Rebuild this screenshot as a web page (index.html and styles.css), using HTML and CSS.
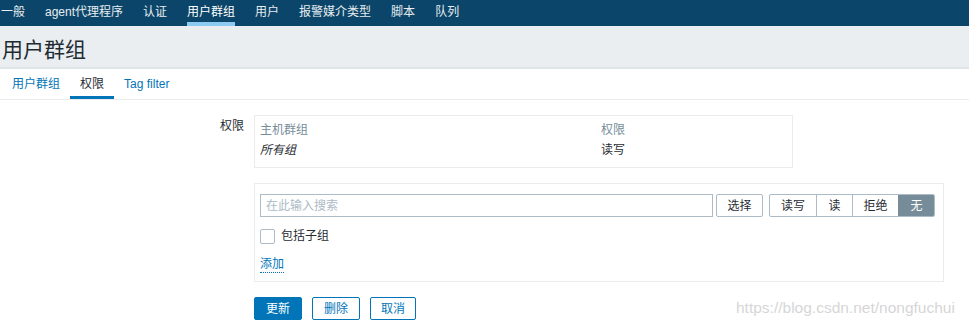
FILE: index.html
```html
<!DOCTYPE html>
<html lang="zh">
<head>
<meta charset="utf-8">
<title>用户群组</title>
<link rel="stylesheet" href="styles.css">
</head>
<body>
<nav class="topnav">
  <a class="nav-item">一般</a>
  <a class="nav-item">agent代理程序</a>
  <a class="nav-item">认证</a>
  <a class="nav-item active">用户群组</a>
  <a class="nav-item">用户</a>
  <a class="nav-item">报警媒介类型</a>
  <a class="nav-item">脚本</a>
  <a class="nav-item">队列</a>
</nav>
<header class="page-header">
  <h1 class="page-title">用户群组</h1>
</header>
<div class="tabs">
  <a class="tab">用户群组</a>
  <a class="tab active">权限</a>
  <a class="tab">Tag filter</a>
</div>
<main class="content">
  <div class="form-row">
    <label class="form-label">权限</label>
    <div class="form-field">
      <div class="perm-table">
        <div class="perm-row head">
          <span class="col-group">主机群组</span>
          <span class="col-perm">权限</span>
        </div>
        <div class="perm-row">
          <span class="col-group italic">所有组</span>
          <span class="col-perm">读写</span>
        </div>
      </div>
    </div>
  </div>
  <div class="form-row">
    <div class="form-label"></div>
    <div class="form-field">
      <div class="add-box">
        <div class="search-line">
          <input class="search-input" type="text" placeholder="在此输入搜索">
          <button class="btn-grey">选择</button>
          <div class="segmented">
            <span class="seg">读写</span>
            <span class="seg">读</span>
            <span class="seg">拒绝</span>
            <span class="seg selected">无</span>
          </div>
        </div>
        <label class="check-line">
          <span class="checkbox"></span>
          <span class="check-text">包括子组</span>
        </label>
        <a class="link-add">添加</a>
      </div>
    </div>
  </div>
  <div class="form-row">
    <div class="form-label"></div>
    <div class="form-field buttons">
      <button class="btn-main">更新</button>
      <button class="btn-alt">删除</button>
      <button class="btn-alt">取消</button>
    </div>
  </div>
</main>
<div class="watermark">https://blog.csdn.net/nongfuchui</div>
</body>
</html>
```

FILE: styles.css
```css
* { box-sizing: border-box; }
html, body {
  margin: 0;
  padding: 0;
  background: #ffffff;
}
body {
  font-family: "Liberation Sans", Arial, "Noto Sans CJK SC", sans-serif;
  font-size: 12px;
  line-height: 16px;
  color: #1f2c33;
  position: relative;
  width: 969px;
  height: 329px;
  overflow: hidden;
}

/* top navigation */
.topnav {
  display: flex;
  gap: 20px;
  height: 26px;
  background: #0b466a;
  padding-left: 1px;
}
.nav-item {
  display: block;
  padding-top: 2px;
  line-height: 20px;
  border-bottom: 4px solid transparent;
  color: #e8edf0;
  white-space: nowrap;
}
.nav-item.active {
  color: #ffffff;
  border-bottom-color: #8ccaf2;
}

/* page header */
.page-header {
  height: 43px;
  background: #ebeef0;
  border-bottom: 2px solid #dfe4e7;
  padding: 11px 0 0 2px;
}
.page-title {
  margin: 0;
  font-size: 21px;
  line-height: 25px;
  font-weight: normal;
  color: #1f2c33;
}

/* tabs */
.tabs {
  display: flex;
  padding-left: 2px;
  border-bottom: 1px solid #ebebeb;
  height: 31px;
}
.tab {
  display: block;
  padding: 7px 10px 4px;
  line-height: 16px;
  border-bottom: 3px solid transparent;
  color: #0275b8;
}
.tab.active {
  color: #1f2c33;
  border-bottom-color: #0275b8;
}

/* form */
.content {
  padding-top: 15px;
}
.form-row {
  display: grid;
  grid-template-columns: 244px auto;
  column-gap: 10px;
  margin-bottom: 15px;
}
.form-label {
  text-align: right;
  padding-top: 3px;
}
.form-field {
  display: flex;
}

.perm-table {
  width: 539px;
  border: 1px solid #ebebeb;
  padding: 4px 5px 7px;
}
.perm-row {
  display: flex;
  height: 20px;
  line-height: 20px;
}
.perm-row.head {
  color: #768d99;
}
.col-group {
  width: 341px;
}
.italic {
  font-style: italic;
}

.add-box {
  width: 690px;
  height: 99px;
  border: 1px solid #ebebeb;
  padding: 10px 5px 0;
  display: flex;
  flex-direction: column;
}
.search-line {
  display: flex;
  height: 23px;
}
.search-input {
  width: 453px;
  height: 23px;
  margin: 0;
  border: 1px solid #acbbc5;
  padding: 0 5px;
  font: inherit;
  color: #1f2c33;
  outline: none;
}
.search-input::placeholder {
  color: #acbbc5;
}
.btn-grey {
  margin: 0 0 0 3px;
  width: 47px;
  height: 23px;
  border: 1px solid #acbbc5;
  border-radius: 2px;
  background: #ffffff;
  color: #1f2c33;
  font: inherit;
  padding: 0;
}
.segmented {
  display: flex;
  margin-left: 6px;
  height: 23px;
  border: 1px solid #acbbc5;
  border-radius: 2px;
  overflow: hidden;
}
.seg {
  display: flex;
  align-items: center;
  justify-content: center;
  height: 21px;
  border-left: 1px solid #acbbc5;
}
.seg:first-child {
  border-left: none;
  width: 46px;
}
.seg:nth-child(2) { width: 36px; }
.seg:nth-child(3) { width: 46px; }
.seg.selected {
  width: 36px;
  background: #768d99;
  border-left-color: #768d99;
  color: #ffffff;
}

.check-line {
  display: flex;
  align-items: center;
  margin-top: 11px;
  height: 16px;
}
.checkbox {
  width: 15px;
  height: 15px;
  border: 1px solid #acbbc5;
  border-radius: 2px;
  background: #ffffff;
}
.check-text {
  margin-left: 6px;
}
.link-add {
  align-self: flex-start;
  margin-top: 13px;
  color: #0275b8;
  line-height: 15px;
  border-bottom: 1px dotted #0275b8;
}

.buttons {
  gap: 10px;
}
.btn-main, .btn-alt {
  height: 23px;
  margin: 0;
  padding: 0;
  font: inherit;
  border-radius: 2px;
  border: 1px solid #0275b8;
}
.btn-main {
  width: 48px;
  background: #0275b8;
  color: #ffffff;
}
.btn-alt {
  width: 48px;
  background: #ffffff;
  color: #0275b8;
}
.btn-alt:last-child {
  width: 46px;
}

.watermark {
  position: absolute;
  left: 736px;
  top: 299px;
  font-size: 15.5px;
  line-height: 18px;
  color: #d6d6d6;
  white-space: nowrap;
}
```
